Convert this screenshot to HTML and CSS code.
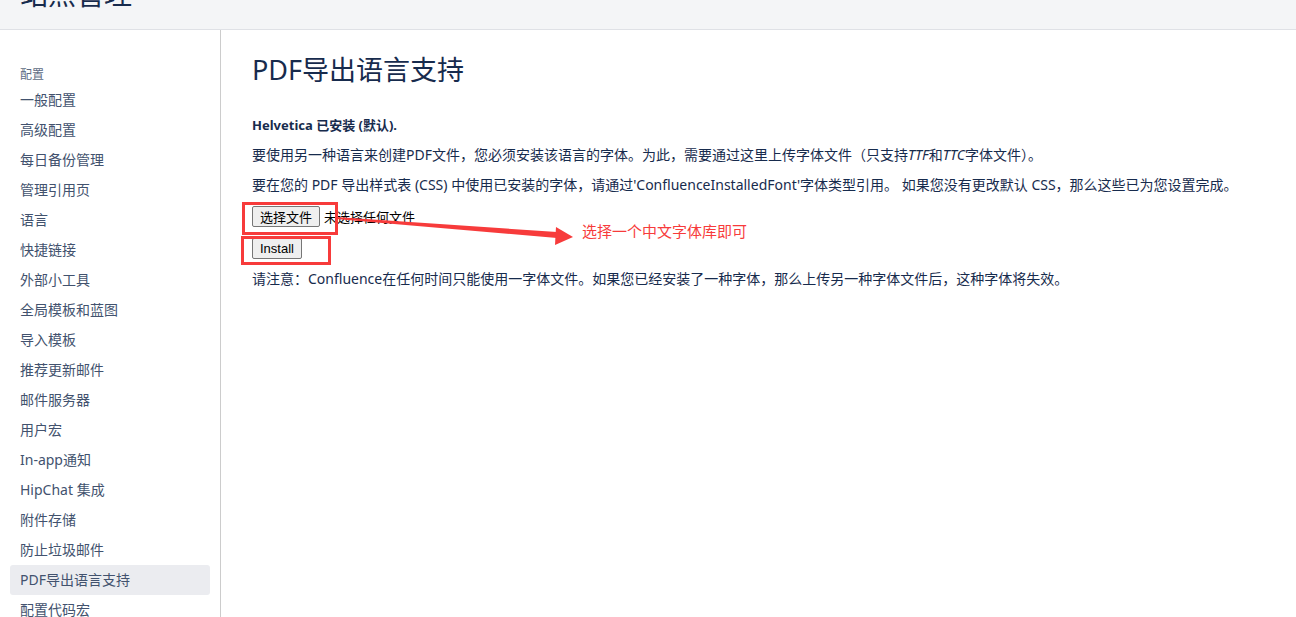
FILE: index.html
```html
<!DOCTYPE html>
<html lang="zh-CN">
<head>
  <meta charset="UTF-8">
  <meta name="viewport" content="width=device-width, initial-scale=1.0">
  <title>站点管理 - PDF导出语言支持</title>
  <link rel="stylesheet" href="styles.css">
</head>
<body>
  <header class="topbar">
    <h1>站点管理</h1>
  </header>

  <div class="layout">
    <nav class="sidebar">
      <div class="side-heading">配置</div>
      <a class="side-item" href="#">一般配置</a>
      <a class="side-item" href="#">高级配置</a>
      <a class="side-item" href="#">每日备份管理</a>
      <a class="side-item" href="#">管理引用页</a>
      <a class="side-item" href="#">语言</a>
      <a class="side-item" href="#">快捷链接</a>
      <a class="side-item" href="#">外部小工具</a>
      <a class="side-item" href="#">全局模板和蓝图</a>
      <a class="side-item" href="#">导入模板</a>
      <a class="side-item" href="#">推荐更新邮件</a>
      <a class="side-item" href="#">邮件服务器</a>
      <a class="side-item" href="#">用户宏</a>
      <a class="side-item" href="#">In-app通知</a>
      <a class="side-item" href="#">HipChat 集成</a>
      <a class="side-item" href="#">附件存储</a>
      <a class="side-item" href="#">防止垃圾邮件</a>
      <a class="side-item active" href="#">PDF导出语言支持</a>
      <a class="side-item" href="#">配置代码宏</a>
    </nav>

    <main class="content">
      <h2>PDF导出语言支持</h2>
      <p><strong>Helvetica 已安装 (默认).</strong></p>
      <p>要使用另一种语言来创建PDF文件，您必须安装该语言的字体。为此，需要通过这里上传字体文件（只支持<em>TTF</em>和<em>TTC</em>字体文件）。</p>
      <p>要在您的 PDF 导出样式表 (CSS) 中使用已安装的字体，请通过'ConfluenceInstalledFont'字体类型引用。 如果您没有更改默认 CSS，那么这些已为您设置完成。</p>
      <div class="file-row">
        <button class="btn" type="button">选择文件</button>
        <span class="file-name">未选择任何文件</span>
      </div>
      <div class="install-row">
        <button class="btn" type="button">Install</button>
      </div>
      <p>请注意：Confluence在任何时间只能使用一字体文件。如果您已经安装了一种字体，那么上传另一种字体文件后，这种字体将失效。</p>
    </main>
  </div>

  <!-- screenshot annotations -->
  <div class="mark mark-file"></div>
  <div class="mark mark-install"></div>
  <svg class="arrow" width="1296" height="617" viewBox="0 0 1296 617">
    <polygon points="336,217 557,232 557,238 336,219" fill="#f73b3b"/>
    <polygon points="556,227 573,237 555,245" fill="#f73b3b"/>
  </svg>
  <div class="note">选择一个中文字体库即可</div>
</body>
</html>
```

FILE: styles.css
```css
* {
  box-sizing: border-box;
}

body {
  margin: 0;
  height: 617px;
  overflow: hidden;
  font-family: 'Segoe UI', 'Noto Sans', 'Noto Sans CJK SC', sans-serif;
  font-size: 14px;
  color: #172b4d;
  background: #fff;
}

.topbar {
  height: 30px;
  background: #f4f5f7;
  border-bottom: 1px solid #dfe1e6;
  overflow: hidden;
}

.topbar h1 {
  margin: -26px 0 0 20px;
  font-size: 28px;
  font-weight: normal;
  line-height: 40px;
}

.layout {
  display: flex;
  height: 587px;
}

.sidebar {
  width: 221px;
  flex: none;
  border-right: 1px solid #ccc;
  padding-top: 35px;
  display: flex;
  flex-direction: column;
}

.side-heading {
  font-size: 12px;
  line-height: 20px;
  color: #5e6c84;
  padding-left: 20px;
}

.side-item {
  display: block;
  height: 30px;
  line-height: 30px;
  margin: 0 10px;
  padding: 0 10px;
  color: #42526e;
  text-decoration: none;
  border-radius: 3px;
}

.side-item.active {
  background: #ebecf0;
}

.content {
  flex: 1;
  padding: 20px 0 0 31px;
}

.content h2 {
  margin: 0 0 25px;
  font-size: 27px;
  font-weight: normal;
  line-height: 40px;
  color: #172b4d;
}

.content p {
  margin: 0 0 10px;
  line-height: 20px;
}

.content strong {
  font-size: 13px;
}

.file-row, .install-row {
  display: flex;
  align-items: center;
  height: 22px;
  margin-bottom: 10px;
}

.btn {
  font-family: 'Liberation Sans', 'Noto Sans CJK SC', sans-serif;
  font-size: 13px;
  height: 21px;
  padding: 0 7px;
  margin: 0;
  background: #efefef;
  border: 1px solid #767676;
  border-radius: 2px;
  color: #000;
}

.file-name {
  font-family: 'Liberation Sans', 'Noto Sans CJK SC', sans-serif;
  font-size: 13px;
  color: #000;
  margin-left: 4px;
}

.mark {
  position: absolute;
  border: 3px solid #f73b3b;
}

.mark-file {
  left: 242px;
  top: 202px;
  width: 96px;
  height: 33px;
}

.mark-install {
  left: 241px;
  top: 236px;
  width: 90px;
  height: 29px;
}

.arrow {
  position: absolute;
  left: 0;
  top: 0;
  pointer-events: none;
}

.note {
  position: absolute;
  left: 582px;
  top: 221px;
  font-size: 15px;
  line-height: 20px;
  color: #f73b3b;
}
```
